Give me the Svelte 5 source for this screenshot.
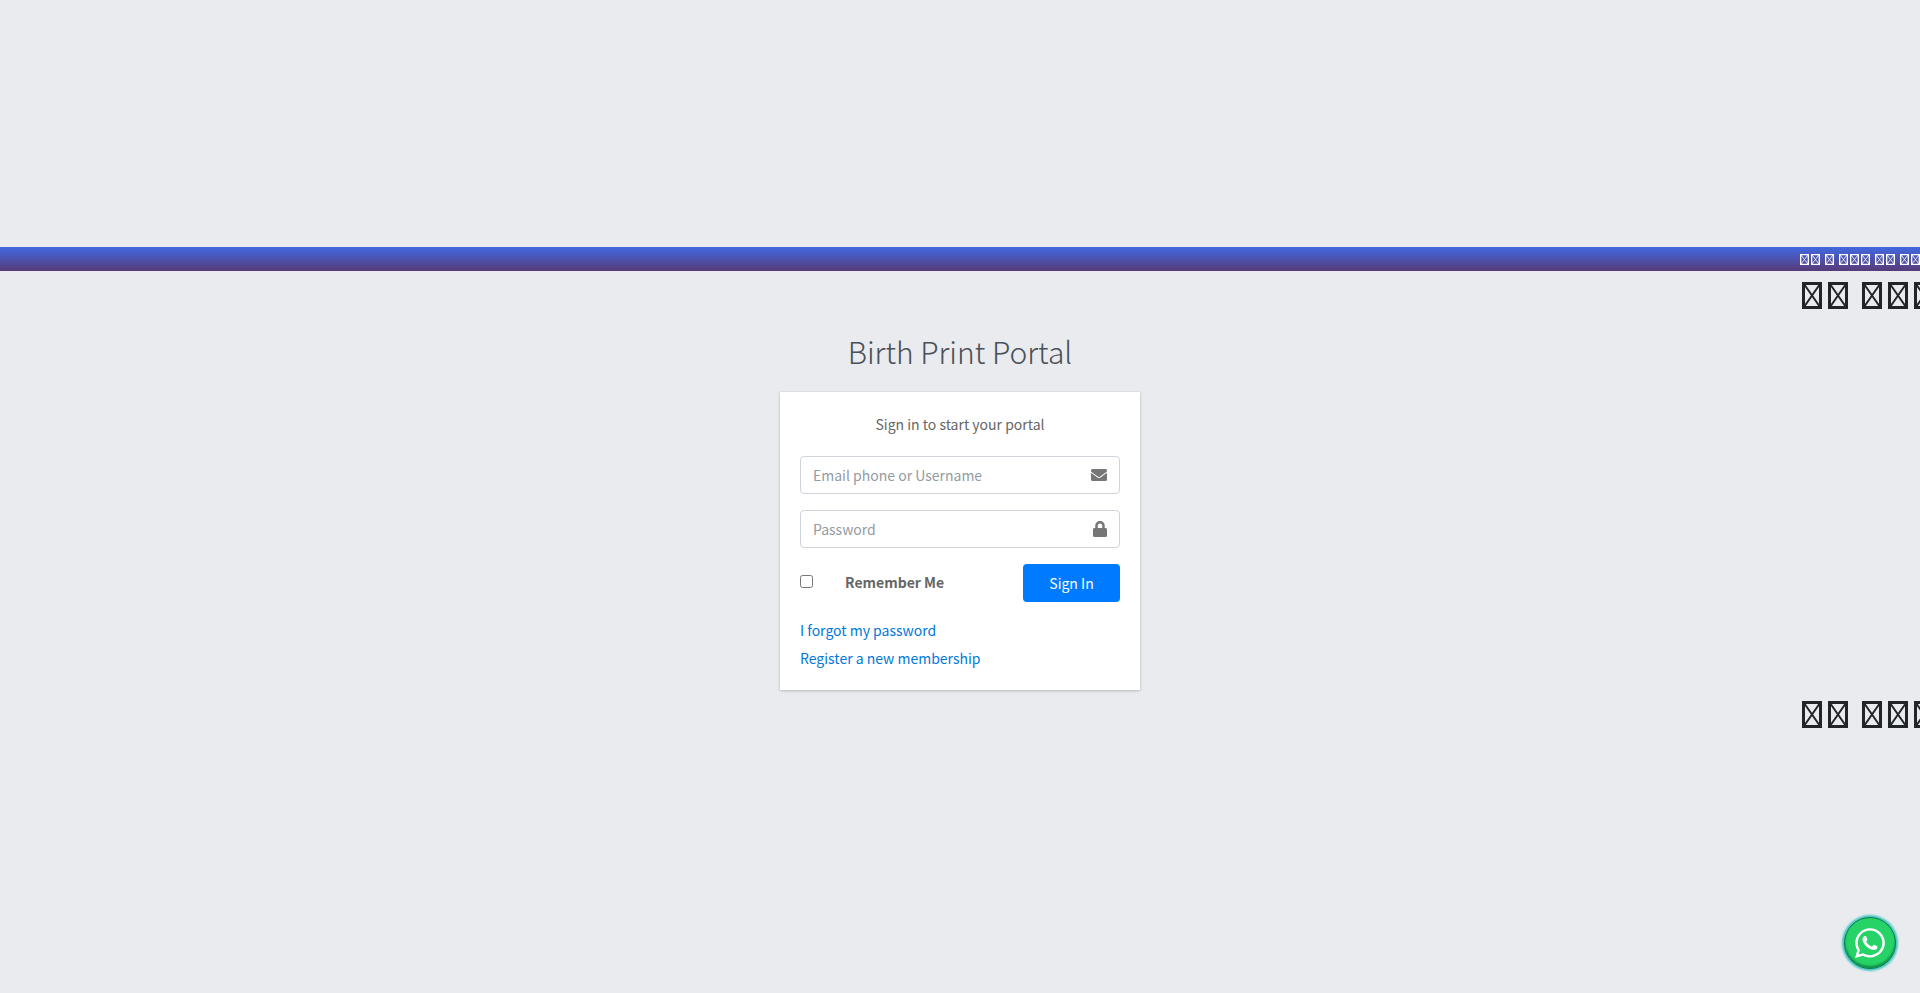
<script>
	let login = $state('');
	let password = $state('');
	let remember = $state(false);

	// boxes per word in the tickers
	const notice = [2, 1, 3, 2, 2];
	const headline = [2, 3];

	function signIn(event) {
		event.preventDefault();
	}
</script>

{#snippet boxes(words)}
	{#each words as count}
		<span class="word">
			{#each { length: count } as _}
				<svg class="box" viewBox="0 0 20 27" preserveAspectRatio="none" aria-hidden="true">
					<path class="frame" d="M1.500 1.500h17v24h-17z" />
					<path d="M2 2l16 23M18 2L2 25" />
				</svg>
			{/each}
		</span>
	{/each}
{/snippet}

<div class="login-page">
	<div class="notice-bar">
		<div class="ticker">{@render boxes(notice)}</div>
	</div>
	<div class="ticker headline">{@render boxes(headline)}</div>

	<main class="login-box">
		<h1 class="login-logo">Birth Print Portal</h1>
		<div class="card">
			<p class="login-msg">Sign in to start your portal</p>
			<form onsubmit={signIn}>
				<div class="field">
					<input
						type="text"
						aria-label="Email phone or Username"
						placeholder="Email phone or Username"
						bind:value={login}
					/>
					<svg width="16" height="16" viewBox="0 0 512 512" aria-hidden="true">
						<path
							d="M502.3 190.8c3.9-3.1 9.7-.2 9.7 4.7V400c0 26.5-21.5 48-48 48H48c-26.5 0-48-21.5-48-48V195.600c0-5 5.700-7.800 9.700-4.700 22.400 17.400 52.100 39.500 154.100 113.600 21.100 15.400 56.700 47.800 92.200 47.600 35.700.3 72-32.800 92.300-47.600 102-74.100 131.600-96.300 154-113.700zM256 320c23.200.4 56.600-29.200 73.400-41.400 132.700-96.300 142.800-104.700 173.400-128.700 5.800-4.500 9.200-11.500 9.200-18.900v-19c0-26.500-21.500-48-48-48H48c-26.500 0-48 21.500-48 48v19c0 7.400 3.400 14.300 9.200 18.900 30.600 23.900 40.700 32.400 173.400 128.700 16.800 12.200 50.200 41.800 73.400 41.400z"
						/>
					</svg>
				</div>
				<div class="field">
					<input
						type="password"
						aria-label="Password"
						placeholder="Password"
						bind:value={password}
					/>
					<svg width="14" height="16" viewBox="0 0 448 512" aria-hidden="true">
						<path
							d="M400 224h-24v-72C376 68.200 307.800 0 224 0S72 68.200 72 152v72H48c-26.500 0-48 21.500-48 48v192c0 26.500 21.500 48 48 48h352c26.500 0 48-21.500 48-48V272c0-26.500-21.500-48-48-48zm-104 0H152v-72c0-39.700 32.300-72 72-72s72 32.300 72 72v72z"
						/>
					</svg>
				</div>
				<div class="actions">
					<label class="remember">
						<input type="checkbox" bind:checked={remember} />
						Remember Me
					</label>
					<button type="submit">Sign In</button>
				</div>
			</form>
			<nav class="links">
				<a href="#forgot">I forgot my password</a>
				<a href="#register">Register a new membership</a>
			</nav>
		</div>
	</main>

	<div class="ticker headline">{@render boxes(headline)}</div>
</div>

<a class="whatsapp" href="#whatsapp" aria-label="WhatsApp">
	<svg width="34" height="34" viewBox="0 0 448 512" aria-hidden="true">
		<path
			d="M380.900 97.100C339 55.100 283.200 32 223.900 32c-122.400 0-222 99.600-222 222 0 39.100 10.200 77.300 29.600 111L0 480l117.700-30.900c32.400 17.700 68.900 27 106.100 27h.1c122.300 0 224.100-99.600 224.100-222 0-59.300-25.200-115-67.100-157zm-157 341.600c-33.200 0-65.700-8.900-94-25.700l-6.700-4-69.800 18.300L72 359.200l-4.400-7c-18.500-29.400-28.200-63.300-28.200-98.200 0-101.700 82.800-184.500 184.600-184.500 49.300 0 95.600 19.200 130.400 54.100 34.800 34.900 56.200 81.200 56.100 130.500 0 101.800-84.900 184.600-186.600 184.600zm101.200-138.200c-5.500-2.800-32.800-16.200-37.900-18-5.100-1.900-8.800-2.800-12.500 2.800-3.700 5.600-14.300 18-17.600 21.800-3.200 3.700-6.500 4.200-12 1.400-32.600-16.300-54-29.100-75.500-66-5.700-9.800 5.700-9.100 16.300-30.300 1.800-3.700.9-6.900-.5-9.700-1.400-2.800-12.500-30.100-17.100-41.200-4.500-10.800-9.100-9.300-12.500-9.500-3.200-.2-6.900-.2-10.600-.2-3.700 0-9.700 1.400-14.800 6.900-5.100 5.600-19.400 19-19.400 46.300 0 27.300 19.900 53.700 22.600 57.400 2.800 3.700 39.100 59.700 94.800 83.800 35.200 15.200 49 16.500 66.600 13.900 10.700-1.600 32.800-13.400 37.400-26.400 4.600-13 4.600-24.100 3.200-26.400-1.300-2.500-5-3.900-10.500-6.600z"
		/>
	</svg>
</a>

<style>
	:global(body) {
		margin: 0;
		background: #e9ebee;
	}

	.login-page {
		display: flex;
		flex-direction: column;
		align-items: center;
		justify-content: center;
		min-height: 100vh;
		overflow: hidden;
		color: #212529;
		font-family: 'Noto Sans CJK JP', 'Open Sans', sans-serif;
		font-size: 14px;
		line-height: 24px;
	}

	.notice-bar {
		display: flex;
		justify-content: flex-end;
		width: 100%;
		background: linear-gradient(#4169e1, #573b78);
		color: white;
	}

	.ticker {
		display: flex;
		gap: 5px;
		box-sizing: border-box;
		width: 120px;
		height: 24px;
		padding-top: 7px;
		overflow: hidden;
	}

	.word {
		display: flex;
		flex: none;
		gap: 2px;
	}

	.box {
		flex: none;
		width: 9px;
		height: 11px;
		fill: none;
		stroke: currentColor;
		stroke-width: 2;
	}
	.frame {
		stroke-width: 3;
	}

	.headline {
		align-self: flex-end;
		gap: 14px;
		height: 54px;
		padding: 11px 0 0 2px;
	}
	.headline:last-child {
		height: 56px;
	}
	.headline .word {
		gap: 6px;
	}
	.headline .box {
		width: 20px;
		height: 27px;
	}

	.login-box {
		width: 360px;
	}

	.login-logo {
		margin: 0 0 14px;
		color: #495057;
		font-size: 30px;
		font-weight: 300;
		line-height: 53px;
		text-align: center;
	}

	.card {
		padding: 20px;
		background: white;
		box-shadow: 0 0 1px rgba(0, 0, 0, 0.13), 0 1px 3px rgba(0, 0, 0, 0.2);
		color: #666;
	}

	.login-msg {
		margin: 0 0 20px;
		text-align: center;
	}

	.field {
		display: flex;
		align-items: center;
		box-sizing: border-box;
		height: 38px;
		margin-bottom: 16px;
		padding: 0 12px;
		border: 1px solid #ced4da;
		border-radius: 4px;
	}
	.field:focus-within {
		border-color: #80bdff;
	}
	.field input {
		flex: 1;
		min-width: 0;
		padding: 0;
		border: 0;
		outline: 0;
		background: none;
		color: #495057;
		font: inherit;
	}
	.field input::placeholder {
		color: #939ba2;
		opacity: 1;
	}
	.field svg {
		fill: #777;
	}

	.actions {
		display: flex;
		justify-content: space-between;
	}

	.remember {
		display: flex;
		align-items: center;
		gap: 32px;
		height: 35px;
		font-weight: 700;
	}
	.remember input {
		width: 13px;
		height: 13px;
		margin: 0;
	}

	button {
		width: 97px;
		height: 38px;
		padding: 0;
		border: 0;
		border-radius: 4px;
		background: #007bff;
		color: white;
		font: inherit;
		cursor: pointer;
	}

	.links {
		display: flex;
		flex-direction: column;
		align-items: flex-start;
		gap: 4px;
		margin-top: 16px;
	}
	.links a {
		color: #0078dc;
		text-decoration: none;
	}

	.whatsapp {
		position: fixed;
		right: 24px;
		bottom: 24px;
		display: flex;
		align-items: center;
		justify-content: center;
		box-sizing: border-box;
		width: 52px;
		height: 52px;
		border: 1px solid #0f7a4a;
		border-radius: 50%;
		background: #25d366;
		box-shadow: inset 0 -2px 2px #128c4a, 0 0 2px 2px #45c5c4;
	}
	.whatsapp svg {
		fill: white;
	}
</style>
